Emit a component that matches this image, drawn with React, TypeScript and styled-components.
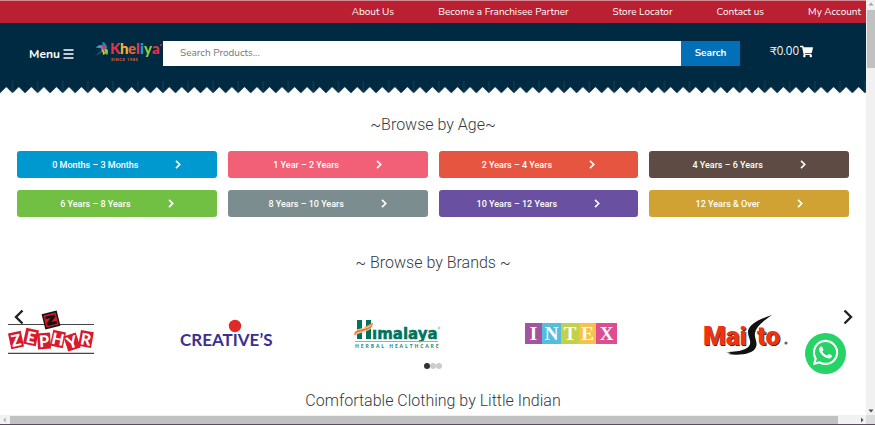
import React from "react";
import styled, { createGlobalStyle } from "styled-components";
import { FaShoppingCart, FaWhatsapp } from "react-icons/fa";

const GlobalStyle = createGlobalStyle`
  *, *::before, *::after { box-sizing: border-box; }
  body { margin: 0; background: #fff; font-family: Roboto, sans-serif; }
`;

const Window = styled.div`
  position: relative;
  display: grid;
  grid-template-columns: minmax(0, 1fr) 9px;
  grid-template-rows: minmax(0, 1fr) 10px;
  height: 100vh;
  overflow: hidden;
`;

const Page = styled.div`
  overflow: hidden;
  background: #fff;
`;

const TopBar = styled.nav`
  display: flex;
  justify-content: flex-end;
  align-items: center;
  gap: 44px;
  height: 23px;
  padding-right: 5px;
  border-top: 1px solid #d58a95;
  background: #ba2031;
`;

const TopLink = styled.a`
  color: #fff;
  font: 400 10px/14px Nunito, "Open Sans", sans-serif;
  text-decoration: none;
  white-space: nowrap;
`;

const Header = styled.header`
  background: #002a41;
`;

const HeaderRow = styled.div`
  display: flex;
  align-items: center;
  height: 58px;
  padding: 2px 53px 0 29px;
  font-family: Nunito, "Open Sans", sans-serif;
`;

const MenuButton = styled.button`
  display: flex;
  align-items: center;
  gap: 3px;
  width: 65px;
  padding: 2px 0 0;
  border: 0;
  background: none;
  color: #fff;
  font: 700 12px/16px Nunito, "Open Sans", sans-serif;
`;

const LogoLink = styled.a`
  display: block;
  width: 69px;
  height: 26px;
`;

const SearchForm = styled.form`
  display: flex;
  flex: 1;
  height: 25px;
`;

const SearchInput = styled.input`
  flex: 1;
  min-width: 0;
  padding: 0 17px;
  border: 0;
  border-radius: 0;
  background: #fff;
  color: #555;
  font: 400 10px/14px Nunito, "Open Sans", sans-serif;
  &::placeholder { color: #757575; opacity: 1; }
`;

const SearchButton = styled.button`
  width: 59px;
  padding: 0;
  border: 0;
  background: #0170b9;
  color: #fff;
  font: 700 10px/14px Nunito, "Open Sans", sans-serif;
`;

const CartLink = styled.a`
  display: flex;
  align-items: center;
  gap: 1px;
  margin-left: 30px;
  padding-bottom: 3px;
  color: #fff;
  font: 400 11px/16px Nunito, "Open Sans", sans-serif;
  text-decoration: none;
`;

const ZigzagSvg = styled.svg`
  display: block;
  width: 100%;
  height: 13px;
`;

const Heading = styled.h2`
  margin: 0;
  color: #343a40;
  font: 300 16px/24px Roboto, sans-serif;
  text-align: center;
`;

const AgeSection = styled.section`
  padding: 19px 17px 0;
`;

const AgeGrid = styled.div`
  display: grid;
  grid-template-columns: repeat(4, 1fr);
  gap: 12px 11px;
  margin-top: 14px;
`;

const AgeLink = styled.a<{ $color: string }>`
  display: flex;
  align-items: center;
  justify-content: center;
  gap: 37px;
  height: 27px;
  border-radius: 3px;
  background: ${(p) => p.$color};
  color: #fff;
  font: 500 9px/12px Roboto, sans-serif;
  text-decoration: none;
`;

const BrandSection = styled.section`
  padding-top: 34px;
`;

const Carousel = styled.div`
  position: relative;
  margin-top: 33px;
`;

const Slides = styled.div`
  display: grid;
  grid-template-columns: repeat(5, 1fr);
`;

const Slide = styled.a`
  display: block;
  height: 55px;
  padding-left: 4px;
`;

const Arrow = styled.button<{ $side: "left" | "right" }>`
  position: absolute;
  top: 1px;
  ${(p) => p.$side}: 13px;
  width: 11px;
  height: 16px;
  padding: 0;
  border: 0;
  background: none;
  color: #222;
`;

const Dots = styled.div`
  display: flex;
  justify-content: center;
`;

const Dot = styled.button<{ $active?: boolean }>`
  width: 6px;
  height: 6px;
  padding: 0;
  border: 0;
  border-radius: 50%;
  background: ${(p) => (p.$active ? "#333" : "#ccc")};
`;

const ClothingSection = styled.section`
  padding-top: 20px;
`;

const ChatLink = styled.a`
  position: absolute;
  right: 29px;
  bottom: 51px;
  display: flex;
  align-items: center;
  justify-content: center;
  width: 41px;
  height: 41px;
  padding-bottom: 3px;
  border-radius: 50%;
  background: #25d366;
  color: #fff;
`;

const VerticalBar = styled.div`
  display: flex;
  flex-direction: column;
  align-items: center;
  background: #f1f1f1;
`;

const VerticalThumb = styled.div`
  width: 8px;
  height: 58px;
  margin: 2px 0 auto;
  background: #c1c1c1;
`;

const HorizontalBar = styled.div`
  display: flex;
  align-items: center;
  justify-content: space-between;
  grid-column: 1 / -1;
  border-bottom: 1px solid #5d4a63;
  background: #f1f1f1;
`;

const HorizontalThumb = styled.div`
  flex: 1;
  height: 8px;
  margin: 0 20px 0 2px;
  background: #c1c1c1;
`;

const Corner = styled.div`
  width: 9px;
  height: 9px;
  background: #dcdcdc;
`;

const TriangleSvg = styled.svg`
  display: block;
  width: 8px;
  height: 8px;
`;

const Triangle = ({ d, color }: { d: string; color: string }) => (
  <TriangleSvg viewBox="0 0 8 8" aria-hidden="true">
    <path d={d} fill={color} />
  </TriangleSvg>
);

const MenuIcon = () => (
  <svg width="11" height="12" viewBox="0 0 11 12" stroke="currentColor" strokeWidth="1.3" aria-hidden="true">
    <path d="M.5 2h10M.5 6h10M.5 10h10" />
  </svg>
);

const Chevron = ({ left = false, width, height, weight }: { left?: boolean; width: number; height: number; weight: number }) => (
  <svg width={width} height={height} viewBox="0 0 10 16" fill="none" stroke="currentColor" strokeWidth={weight} aria-hidden="true">
    <path d={left ? "M8.5 1.5 2 8l6.5 6.5" : "M1.5 1.5 8 8l-6.5 6.5"} />
  </svg>
);

const Zigzag = () => (
  <ZigzagSvg aria-hidden="true">
    <defs>
      <pattern id="zigzag" width="25.07" height="13" patternUnits="userSpaceOnUse">
        <path d="M12.6 0V12" stroke="#1c4055" strokeWidth="1" />
        <path d="M0 12.300 6.270 6l6.270 6.300 6.270-6.300 6.260 6.300V13H0Z" fill="#fff" />
      </pattern>
    </defs>
    <rect width="100%" height="13" fill="url(#zigzag)" />
  </ZigzagSvg>
);

const KheliyaLogo = () => (
  <svg width="69" height="26" viewBox="0 0 69 26" role="img" aria-label="Kheliya">
    <path d="M2 8C4 4 9 4 12 8l-2 3C8 8 5 7 2 8Z" fill="#3f9be0" />
    <path d="M8 2c3 0 5 3 5 6l-3 3C10 7 8 5 8 2Z" fill="#2583c5" />
    <path d="m8 10-7 6 7-4 2-3Z" fill="#1d6b9d" />
    <path d="M7 9c2 0 4 2 4 5l-2 1C9 12 8 11 7 9Z" fill="#f7b731" />
    <circle cx="10" cy="7" r="2" fill="#e63b3b" />
    <path d="M11 9c3-1 4 3 2 6-2-1-3-3-2-6Z" fill="#8cc63f" />
    <text y="14" fontFamily="Lato, sans-serif" fontWeight="900" fontSize="15">
      <tspan x="16" fill="#e63344">K</tspan>
      <tspan x="26" fill="#f9b233">h</tspan>
      <tspan x="34" fill="#ef6135">e</tspan>
      <tspan x="42" fill="#e33b43">l</tspan>
      <tspan x="46" fill="#2f9bd8">i</tspan>
      <tspan x="50" fill="#9bc93c">y</tspan>
      <tspan x="58" fill="#e6334c">a</tspan>
    </text>
    <text x="17" y="21" fill="#dd6236" fontFamily="Roboto, sans-serif" fontWeight="700" fontSize="4" letterSpacing="0.6">SINCE 1985</text>
    <circle cx="67" cy="5" r="1" fill="#c5333d" />
  </svg>
);

const zephyrTiles = [
  { letter: "Z", x: 12, y: 32, turn: -12 },
  { letter: "E", x: 27, y: 29, turn: 12 },
  { letter: "P", x: 40, y: 33, turn: -4 },
  { letter: "H", x: 54, y: 31, turn: 12 },
  { letter: "Y", x: 68, y: 34, turn: -18 },
  { letter: "R", x: 82, y: 31, turn: 10 },
];

const ZephyrLogo = () => (
  <svg width="92" height="48" viewBox="0 0 92 48" role="img" aria-label="Zephyr">
    <path d="M4 16.500H90M4 45.300H90" stroke="#444" strokeWidth="1.200" />
    <g transform="translate(47 12) rotate(-14)">
      <rect x="-7" y="-7" width="14" height="14" fill="#df1728" stroke="#151515" strokeWidth="1.500" />
      <path d="M-5-4.500H5V-2L0 2H5v3H-5V2L0-2h-5Z" fill="#111" />
    </g>
    {zephyrTiles.map((t) => (
      <g key={t.letter} transform={`translate(${t.x} ${t.y}) rotate(${t.turn})`}>
        <rect x="-6.500" y="-8" width="13" height="16" fill="#d91a2c" />
        <text y="6" textAnchor="middle" fill="#fff" fontFamily="Lato, sans-serif" fontWeight="900" fontSize="16">{t.letter}</text>
      </g>
    ))}
  </svg>
);

const CreativesLogo = () => (
  <svg width="96" height="48" viewBox="0 0 96 48" role="img" aria-label="Creative's">
    <circle cx="58" cy="18" r="6.200" fill="#df2b27" />
    <text x="3" y="38" fill="#3c2f92" fontFamily="Lato, sans-serif" fontWeight="700" fontSize="17">CREATIVE’S</text>
  </svg>
);

const HimalayaLogo = () => (
  <svg width="92" height="48" viewBox="0 0 92 48" role="img" aria-label="Himalaya Herbal Healthcare">
    <path d="M7 12h5v19H7ZM16 12h5v19h-5Z" fill="#00735f" />
    <path d="M4 27c1-7 7-5 11-8 3-2 4-3 8-4-1 7-6 7-10 9-3 2-6 2-9 3Z" fill="#ee7d32" />
    <path d="M5 23c5-3 12-2 16-6M6 26c5-3 11-2 15-6" stroke="#fff" strokeWidth=".7" fill="none" />
    <text x="22" y="31" fill="#00735f" stroke="#00735f" strokeWidth=".5" fontFamily="DejaVu Sans, sans-serif" fontWeight="700" fontSize="15">ımalaya</text>
    <path d="M5 33.500H88" stroke="#d79a72" />
    <text x="5" y="40" fill="#2c8b78" fontFamily="Open Sans, sans-serif" fontWeight="700" fontSize="5" letterSpacing="1.900">HERBAL HEALTHCARE</text>
    <circle cx="89" cy="20" r="1" fill="none" stroke="#5aa193" strokeWidth=".5" />
  </svg>
);

const intexTiles = [
  { letter: "I", color: "#a354a0", x: 1, width: 17 },
  { letter: "N", color: "#57bddf", x: 18, width: 19 },
  { letter: "T", color: "#c2d14a", x: 37, width: 18 },
  { letter: "E", color: "#f6c24b", x: 55, width: 17 },
  { letter: "X", color: "#de4c91", x: 72, width: 21 },
];

const IntexLogo = () => (
  <svg width="96" height="48" viewBox="0 0 96 48" role="img" aria-label="Intex">
    {intexTiles.map((t) => (
      <g key={t.letter}>
        <rect x={t.x} y="15" width={t.width} height="21" fill={t.color} />
        <text x={t.x + t.width / 2} y="32" textAnchor="middle" fill="#fff" fontFamily="Liberation Serif, serif" fontWeight="700" fontSize="19">{t.letter}</text>
      </g>
    ))}
  </svg>
);

const MaistoLogo = () => (
  <svg width="96" height="52" viewBox="0 0 96 52" role="img" aria-label="Maisto">
    <g fontFamily="Roboto, sans-serif" fontWeight="900" fontSize="26">
      <text x="7" y="38" fill="#333">Mai</text>
      <text x="61" y="38" fill="#333">to</text>
      <text x="6" y="37" fill="#f0320f">Mai</text>
      <text x="60" y="37" fill="#f0320f">to</text>
    </g>
    <path d="M75 7C62 11 51 17 51 24c0 5 3 8 2 12-1 4-7 8-24 8l5 1-3 1c11 2 26 0 28-7 2-5-2-9-1-14 1-6 7-11 17-18Z" fill="#111" />
    <circle cx="89" cy="35" r="1.600" fill="#666" />
  </svg>
);

const topLinks = ["About Us", "Become a Franchisee Partner", "Store Locator", "Contact us", "My Account"];

const ages = [
  { label: "0 Months – 3 Months", color: "#0099cf" },
  { label: "1 Year – 2 Years", color: "#f26077" },
  { label: "2 Years – 4 Years", color: "#e65540" },
  { label: "4 Years – 6 Years", color: "#5e4b43" },
  { label: "6 Years – 8 Years", color: "#71c044" },
  { label: "8 Years – 10 Years", color: "#7b8d8e" },
  { label: "10 Years – 12 Years", color: "#6a50a0" },
  { label: "12 Years & Over", color: "#cfa233" },
];

const brands = [
  { name: "Zephyr", Logo: ZephyrLogo },
  { name: "Creatives", Logo: CreativesLogo },
  { name: "Himalaya", Logo: HimalayaLogo },
  { name: "Intex", Logo: IntexLogo },
  { name: "Maisto", Logo: MaistoLogo },
];

export default function App() {
  return (
    <Window>
      <GlobalStyle />
      <Page>
        <TopBar>
          {topLinks.map((label) => (
            <TopLink key={label} href="#">{label}</TopLink>
          ))}
        </TopBar>
        <Header>
          <HeaderRow>
            <MenuButton type="button">Menu <MenuIcon /></MenuButton>
            <LogoLink href="#"><KheliyaLogo /></LogoLink>
            <SearchForm onSubmit={(e) => e.preventDefault()}>
              <SearchInput type="search" aria-label="Search products" placeholder="Search Products..." />
              <SearchButton type="submit">Search</SearchButton>
            </SearchForm>
            <CartLink href="#">₹0.00<FaShoppingCart size={13} /></CartLink>
          </HeaderRow>
          <Zigzag />
        </Header>
        <AgeSection>
          <Heading>~Browse by Age~</Heading>
          <AgeGrid>
            {ages.map((age) => (
              <AgeLink key={age.label} href="#" $color={age.color}>
                {age.label}
                <Chevron width={6} height={9} weight={3} />
              </AgeLink>
            ))}
          </AgeGrid>
        </AgeSection>
        <BrandSection>
          <Heading>~ Browse by Brands ~</Heading>
          <Carousel>
            <Slides>
              {brands.map(({ name, Logo }) => (
                <Slide key={name} href="#"><Logo /></Slide>
              ))}
            </Slides>
            <Arrow type="button" $side="left" aria-label="Previous brands"><Chevron left width={10} height={16} weight={2.4} /></Arrow>
            <Arrow type="button" $side="right" aria-label="Next brands"><Chevron width={10} height={16} weight={2.4} /></Arrow>
            <Dots>
              <Dot type="button" $active aria-label="Brands 1" />
              <Dot type="button" aria-label="Brands 2" />
              <Dot type="button" aria-label="Brands 3" />
            </Dots>
          </Carousel>
        </BrandSection>
        <ClothingSection>
          <Heading>Comfortable Clothing by Little Indian</Heading>
        </ClothingSection>
      </Page>
      <VerticalBar>
        <Triangle d="M1.500 5.500h5L4 2.500Z" color="#a3a3a3" />
        <VerticalThumb />
        <Triangle d="M1.500 2.500h5L4 5.500Z" color="#505050" />
      </VerticalBar>
      <HorizontalBar>
        <Triangle d="M5.500 1.500v5L3.500 4Z" color="#a3a3a3" />
        <HorizontalThumb />
        <Triangle d="M3 1.500v5L5.500 4Z" color="#505050" />
        <Corner />
      </HorizontalBar>
      <ChatLink href="#" aria-label="Chat on WhatsApp"><FaWhatsapp size={29} /></ChatLink>
    </Window>
  );
}
